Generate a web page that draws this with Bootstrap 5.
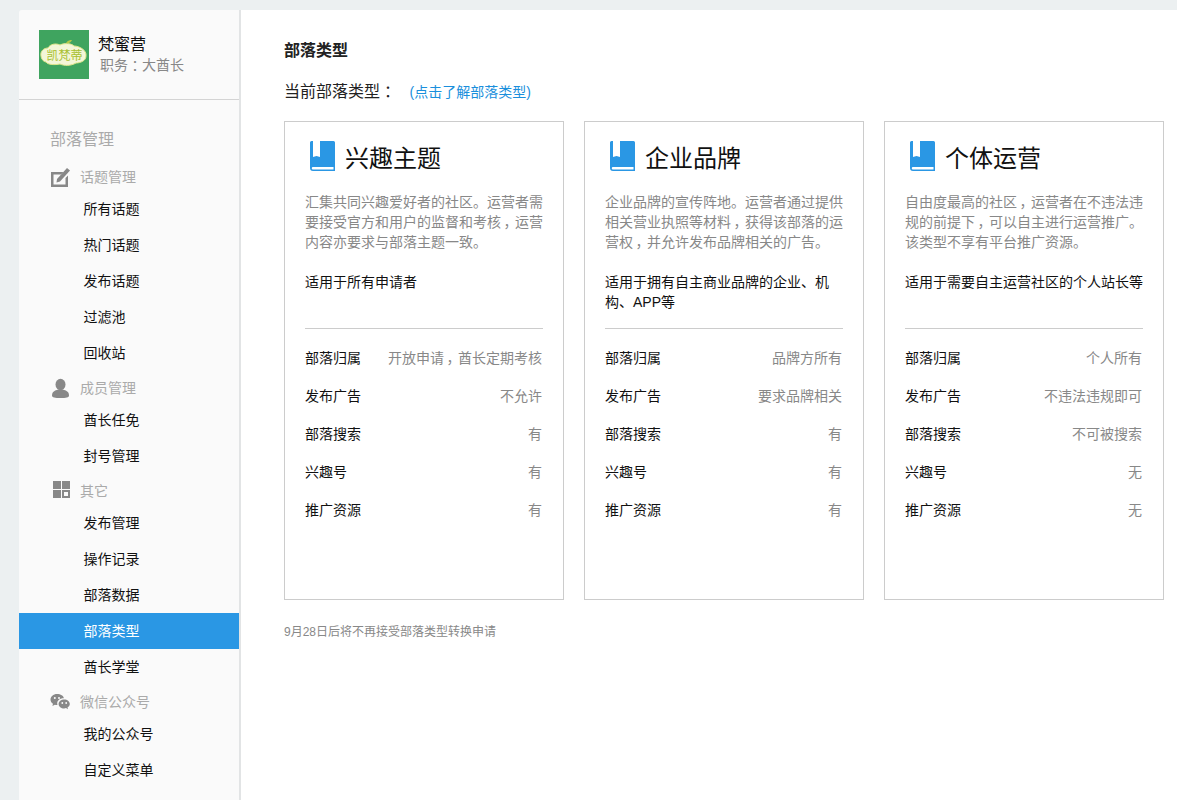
<!DOCTYPE html>
<html lang="zh-CN">
<head>
<meta charset="UTF-8">
<title>部落类型</title>
<link href="https://cdn.jsdelivr.net/npm/bootstrap@5.3.0/dist/css/bootstrap.min.css" rel="stylesheet">
<style>
    html, body { height: 100%; }
    body {
        background: #ecf0f1;
        font-family: "Liberation Sans", "Noto Sans CJK SC", sans-serif;
        font-size: 14px;
        color: #111;
        overflow: hidden;
    }
    .page-wrap { margin: 10px 0 0 19px; height: 790px; }
    .side { width: 222px; background: #fafafa; border-right: 2px solid #e2e4e5; border-top-left-radius: 3px; flex-shrink: 0; }
    .side-head { height: 90px; padding: 20px 0 0 20px; border-bottom: 1px solid #d4d4d4; gap: 9px; }
    .side-logo { width: 50px; height: 49px; display: block; flex-shrink: 0; }
    .side-name { font-size: 16px; line-height: 21px; margin-top: 4px; color: #111; }
    .side-role { font-size: 14px; line-height: 20px; color: #888; padding-left: 2px; }
    .side-title { font-size: 16px; color: #aaa; line-height: 24px; padding: 28px 0 0 31px; height: 60px; }
    .menu-head { height: 28px; margin-top: 3px; padding-left: 31px; color: #aaa; line-height: 28px; }
    .menu-ico { width: 20px; height: 20px; margin-right: 10px; flex-shrink: 0; }
    .menu-item { display: block; height: 36px; line-height: 36px; padding-left: 64.500px; color: #111; text-decoration: none; }
    .menu-item.on { background: #2a97e4; color: #fff; }
    .main-pane { background: #fff; padding: 0 13px 0 43px; }
    .pane-title { font-size: 16px; font-weight: 700; line-height: 24px; padding-top: 29px; color: #222; }
    .cur-type { font-size: 16px; line-height: 24px; margin-top: 17px; color: #222; }
    .cur-type a { font-size: 14px; color: #1a8fdc; text-decoration: none; margin-left: 9px; }
    .type-grid { gap: 20px; }
    .type-box { width: 280px; height: 479px; border: 1px solid #ccc; border-radius: 0; padding: 0 20px; margin-top: 17px; }
    .type-head { height: 70px; padding: 20px 0 0 5px; }
    .type-head svg { margin-top: -1px; flex-shrink: 0; }
    .type-name { font-size: 24px; line-height: 32px; margin: 1px 0 0 10px; color: #111; }
    .type-desc { color: #888; line-height: 20px; height: 60px; margin: 0; white-space: nowrap; }
    .type-for { line-height: 20px; height: 56px; margin: 20px 0 0; color: #111; }
    .type-line { border-top: 1px solid #ccc; height: 11px; }
    .type-row { height: 38px; line-height: 38px; padding: 0 1px 0 0; }
    .type-row span:last-child { color: #888; }
    .foot-note { font-size: 12px; color: #888; margin-top: 23px; line-height: 18px; }
    /* full width punctuation sits in the middle of its cell in the reference */
    .punct-mid { display: inline-block; width: 1em; text-align: center; font-feature-settings: "palt"; }
</style>
</head>
<body>
<div class="page-wrap d-flex">
    <div class="side">
        <div class="side-head d-flex">
            <svg class="side-logo" viewBox="0 0 50 49">
                <rect width="50" height="49" fill="#3fa45f"/>
                <path d="M2 26c-1-5 3-8 7-8 2-4 8-5 12-3 4-2 11-2 14 1 5 0 13 4 12 10 0 5-6 7-10 7-5 3-12 3-16 1-5 1-12 1-14-2-2 0-5-3-5-6z" fill="#f4f6d8" stroke="#dfe68a"/>
                <path d="M27 13c2-3 4-3 6-3-1 2-3 4-6 3z" fill="#b5c84a"/>
                <text x="25.500" y="29.500" font-size="12" text-anchor="middle" fill="#a8c030">凯梵蒂</text>
            </svg>
            <div>
                <div class="side-name">梵蜜营</div>
                <div class="side-role">职务<span class="punct-mid">：</span>大酋长</div>
            </div>
        </div>
        <div class="side-title">部落管理</div>

        <div class="menu-head d-flex align-items-center">
            <svg class="menu-ico" viewBox="0 0 20 20" fill="#888">
                <path d="M1 5h12.500L11 7.500H3.500v10h12V11L18 8.500V20H1z"/>
                <path d="M17 1 20 3.500 10 14.500 6.500 15.500 7 12z"/>
            </svg>
            <span>话题管理</span>
        </div>
        <a class="menu-item" href="#">所有话题</a>
        <a class="menu-item" href="#">热门话题</a>
        <a class="menu-item" href="#">发布话题</a>
        <a class="menu-item" href="#">过滤池</a>
        <a class="menu-item" href="#">回收站</a>

        <div class="menu-head d-flex align-items-center">
            <svg class="menu-ico" viewBox="0 0 20 20" fill="#888">
                <ellipse cx="10.500" cy="6.500" rx="5" ry="5.800"/>
                <path d="M2 17.500c0-4 3-5 6-6h5c3 1 6 2 6 6 0 2-3 2.500-8.500 2.500S2 19.500 2 17.500z"/>
            </svg>
            <span>成员管理</span>
        </div>
        <a class="menu-item" href="#">酋长任免</a>
        <a class="menu-item" href="#">封号管理</a>

        <div class="menu-head d-flex align-items-center">
            <svg class="menu-ico" viewBox="0 0 20 20" fill="#888">
                <path d="M3 0h8v8H3zM12 0h8v8h-8zM3 9h8v8H3z"/>
                <path fill-rule="evenodd" d="M12 9h8v8h-8zM14 11v4h4v-4z"/>
            </svg>
            <span>其它</span>
        </div>
        <a class="menu-item" href="#">发布管理</a>
        <a class="menu-item" href="#">操作记录</a>
        <a class="menu-item" href="#">部落数据</a>
        <a class="menu-item on" href="#">部落类型</a>
        <a class="menu-item" href="#">酋长学堂</a>

        <div class="menu-head d-flex align-items-center">
            <svg class="menu-ico" viewBox="0 0 20 20" fill="#888">
                <path d="M7 2C3.300 2 .500 4.500.500 7.500c0 1.800 1 3.300 2.500 4.300L2.400 14l2.500-1.300c.7.200 1.400.3 2.100.3h.5c-.2-.5-.3-1-.3-1.600 0-3 2.800-5.200 6.200-5.200h.4C13.700 3.800 10.600 2 7 2z"/>
                <path d="M19.800 11.900c0-2.500-2.500-4.500-5.600-4.500s-5.600 2-5.600 4.500 2.500 4.500 5.600 4.500c.6 0 1.200-.1 1.800-.3l2 1.100-.5-1.800c1.400-.8 2.300-2.100 2.300-3.500z"/>
                <circle cx="12.300" cy="11" r=".9" fill="#fafafa"/>
                <circle cx="16.200" cy="11" r=".9" fill="#fafafa"/>
                <circle cx="4.800" cy="6" r="1" fill="#fafafa"/>
                <circle cx="9" cy="6" r="1" fill="#fafafa"/>
            </svg>
            <span>微信公众号</span>
        </div>
        <a class="menu-item" href="#">我的公众号</a>
        <a class="menu-item" href="#">自定义菜单</a>
    </div>

    <div class="main-pane flex-grow-1">
        <div class="pane-title">部落类型</div>
        <div class="cur-type">当前部落类型<span class="punct-mid">：</span> <a href="#">(点击了解部落类型)</a></div>
        <div class="type-grid d-flex">
            <div class="card type-box">
                <div class="type-head d-flex align-items-start">
                    <svg width="25" height="31" viewBox="0 0 25 31"><path fill="#2a97e4" d="M0 1.500A1.500 1.500 0 0 1 1.500 0H3v16l3.500-1 3.500 1V0h13.500A1.500 1.500 0 0 1 25 1.500V30H3a3 3 0 0 1-3-3z"/><path fill="#fff" d="M3 26h20.500v2.500H3a1.250 1.250 0 0 1 0-2.500z"/></svg>
                    <div class="type-name">兴趣主题</div>
                </div>
                <p class="type-desc">汇集共同兴趣爱好者的社区。运营者需<br>要接受官方和用户的监督和考核<span class="punct-mid">，</span>运营<br>内容亦要求与部落主题一致。</p>
                <p class="type-for">适用于所有申请者</p>
                <div class="type-line"></div>
                <div class="type-row d-flex justify-content-between"><span>部落归属</span><span>开放申请<span class="punct-mid">，</span>酋长定期考核</span></div>
                <div class="type-row d-flex justify-content-between"><span>发布广告</span><span>不允许</span></div>
                <div class="type-row d-flex justify-content-between"><span>部落搜索</span><span>有</span></div>
                <div class="type-row d-flex justify-content-between"><span>兴趣号</span><span>有</span></div>
                <div class="type-row d-flex justify-content-between"><span>推广资源</span><span>有</span></div>
            </div>
            <div class="card type-box">
                <div class="type-head d-flex align-items-start">
                    <svg width="25" height="31" viewBox="0 0 25 31"><path fill="#2a97e4" d="M0 1.500A1.500 1.500 0 0 1 1.500 0H3v16l3.500-1 3.500 1V0h13.500A1.500 1.500 0 0 1 25 1.500V30H3a3 3 0 0 1-3-3z"/><path fill="#fff" d="M3 26h20.500v2.500H3a1.250 1.250 0 0 1 0-2.500z"/></svg>
                    <div class="type-name">企业品牌</div>
                </div>
                <p class="type-desc">企业品牌的宣传阵地。运营者通过提供<br>相关营业执照等材料<span class="punct-mid">，</span>获得该部落的运<br>营权<span class="punct-mid">，</span>并允许发布品牌相关的广告。</p>
                <p class="type-for">适用于拥有自主商业品牌的企业、机构、APP等</p>
                <div class="type-line"></div>
                <div class="type-row d-flex justify-content-between"><span>部落归属</span><span>品牌方所有</span></div>
                <div class="type-row d-flex justify-content-between"><span>发布广告</span><span>要求品牌相关</span></div>
                <div class="type-row d-flex justify-content-between"><span>部落搜索</span><span>有</span></div>
                <div class="type-row d-flex justify-content-between"><span>兴趣号</span><span>有</span></div>
                <div class="type-row d-flex justify-content-between"><span>推广资源</span><span>有</span></div>
            </div>
            <div class="card type-box">
                <div class="type-head d-flex align-items-start">
                    <svg width="25" height="31" viewBox="0 0 25 31"><path fill="#2a97e4" d="M0 1.500A1.500 1.500 0 0 1 1.500 0H3v16l3.500-1 3.500 1V0h13.500A1.500 1.500 0 0 1 25 1.500V30H3a3 3 0 0 1-3-3z"/><path fill="#fff" d="M3 26h20.500v2.500H3a1.250 1.250 0 0 1 0-2.500z"/></svg>
                    <div class="type-name">个体运营</div>
                </div>
                <p class="type-desc">自由度最高的社区<span class="punct-mid">，</span>运营者在不违法违<br>规的前提下<span class="punct-mid">，</span>可以自主进行运营推广。<br>该类型不享有平台推广资源。</p>
                <p class="type-for">适用于需要自主运营社区的个人站长等</p>
                <div class="type-line"></div>
                <div class="type-row d-flex justify-content-between"><span>部落归属</span><span>个人所有</span></div>
                <div class="type-row d-flex justify-content-between"><span>发布广告</span><span>不违法违规即可</span></div>
                <div class="type-row d-flex justify-content-between"><span>部落搜索</span><span>不可被搜索</span></div>
                <div class="type-row d-flex justify-content-between"><span>兴趣号</span><span>无</span></div>
                <div class="type-row d-flex justify-content-between"><span>推广资源</span><span>无</span></div>
            </div>
        </div>
        <div class="foot-note">9月28日后将不再接受部落类型转换申请</div>
    </div>
</div>
<script src="https://cdn.jsdelivr.net/npm/bootstrap@5.3.0/dist/js/bootstrap.bundle.min.js"></script>
</body>
</html>
